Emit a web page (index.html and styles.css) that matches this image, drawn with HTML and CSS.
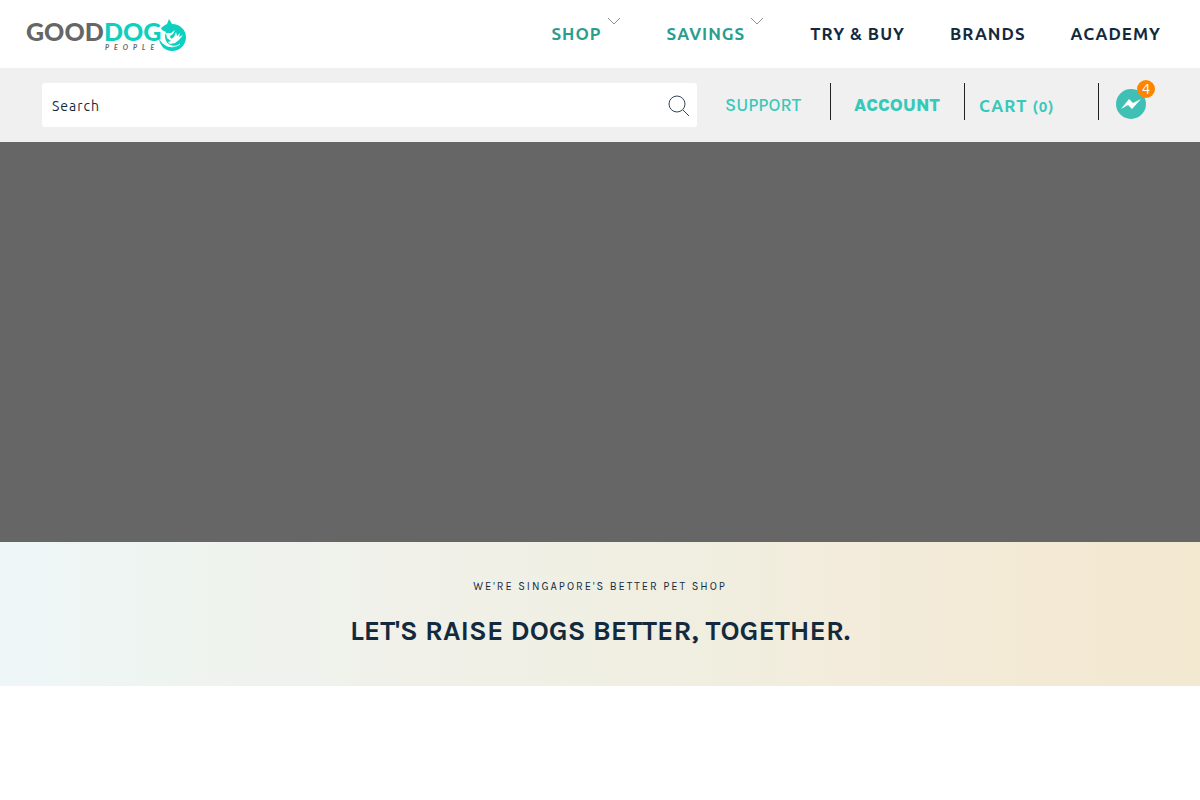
FILE: index.html
```html
<!DOCTYPE html>
<html lang="en">
<head>
  <meta charset="UTF-8" />
  <meta name="viewport" content="width=device-width, initial-scale=1.0"/>
  <title>Good Dog People</title>
  <link rel="stylesheet" href="styles.css">
</head>
<body>

<header class="header">
  <a class="logo" href="#" aria-label="Good Dog People">
    <svg width="162" height="36" viewBox="0 0 162 36">
      <text class="logo-name good" x="0" y="25">GOOD</text>
      <text class="logo-name dog" x="78" y="25">DOG</text>
      <text class="logo-sub" x="79" y="34">PEOPLE</text>
      <!-- dog curled into a circle -->
      <path fill="#0dd0c0" d="M135 12 L139 9 L141 8 L143 3 L146 8 C154 8 160 14 160 21 C160 29 154 35 146 35 C139 35 134 30 133 23 C137 29 142 32 148 31 C142 29 139 25 139 20 L140 16 L136 14 Z"/>
      <path fill="#fff" d="M140 17 L145 17 L149 14 L147 18 L144 20 L145 23 L148 21 L150 16 L151 20 L154 17 L153 21 L157 19 L153 24 L149 27 L144 28 L142 26 L145 25 L141 22 Z"/>
      <path fill="none" stroke="#fff" d="M142 28 C146 31 150 31 154 28"/>
    </svg>
  </a>
  <nav class="nav">
    <a class="nav-link has-menu" href="#">SHOP
      <svg class="chevron" width="14" height="8" viewBox="0 0 14 8"><path d="M1 1l6 6 6-6"/></svg>
    </a>
    <a class="nav-link has-menu" href="#">SAVINGS
      <svg class="chevron" width="14" height="8" viewBox="0 0 14 8"><path d="M1 1l6 6 6-6"/></svg>
    </a>
    <a class="nav-link" href="#">TRY &amp; BUY</a>
    <a class="nav-link" href="#">BRANDS</a>
    <a class="nav-link" href="#">ACADEMY</a>
  </nav>
</header>

<div class="toolbar">
  <form class="search">
    <input type="text" placeholder="Search" aria-label="Search">
    <button type="submit" aria-label="Submit search">
      <svg width="22" height="22" viewBox="0 0 22 22"><circle cx="10" cy="10" r="8"/><path d="M16 16l6 6"/></svg>
    </button>
  </form>
  <a class="support" href="#">SUPPORT</a>
  <a class="account" href="#">ACCOUNT</a>
  <a class="cart" href="#">CART <span class="cart-count">(0)</span></a>
  <a class="messenger" href="#" aria-label="Messages">
    <svg width="30" height="30" viewBox="0 0 30 30">
      <circle cx="15" cy="15" r="15" fill="#40c0b5"/>
      <path fill="#fff" d="M5 20 L13 10 L17 14 L25 10 L16 20 L12 16 Z"/>
    </svg>
    <span class="badge">4</span>
  </a>
</div>

<section class="hero"></section>

<section class="intro">
  <p>WE'RE SINGAPORE'S BETTER PET SHOP</p>
  <h1>LET'S RAISE DOGS BETTER, TOGETHER.</h1>
</section>

</body>
</html>
```

FILE: styles.css
```css
* {
  box-sizing: border-box;
}

body {
  margin: 0;
  background-color: #fff;
  color: #132a3e;
  font-family: Ubuntu, "Noto Sans", sans-serif;
}

a {
  text-decoration: none;
}

.header {
  display: flex;
  align-items: center;
  justify-content: space-between;
  height: 68px;
  padding: 0 39px 0 26px;
}

.logo svg {
  display: block;
}

.logo-name {
  font: 900 25px Lato, sans-serif;
}

.good {
  fill: #666;
}

.dog {
  fill: #0dd0c0;
}

.logo-sub {
  font: italic 700 7px Lato, sans-serif;
  letter-spacing: 5px;
  fill: #666;
}

.nav {
  display: flex;
  gap: 45px;
}

.nav-link {
  color: #132a3e;
  font-size: 17px;
  font-weight: 700;
  letter-spacing: 1px;
  line-height: 24px;
}

.has-menu {
  display: flex;
  gap: 5px;
  padding-right: 1px;
  color: #2a9d8f;
}

.chevron {
  fill: none;
  stroke: #89929b;
  margin-top: -5px;
}

.toolbar {
  display: flex;
  align-items: center;
  height: 74px;
  padding: 0 54px 0 42px;
  background-color: #f0f0f0;
}

.search {
  display: flex;
  flex: 1;
  height: 44px;
  background-color: #fff;
  border-radius: 3px;
}

.search input {
  flex: 1;
  min-width: 0;
  padding: 2px 10px 0;
  border: none;
  background: none;
  color: #132a3e;
  font-family: inherit;
  font-size: 14px;
  letter-spacing: 1px;
}

.search input::placeholder {
  color: #132a3e;
}

.search button {
  padding: 0 8px;
  border: none;
  background: none;
  cursor: pointer;
}

.search button svg {
  display: block;
  fill: none;
  stroke: #364859;
}

.support,
.account,
.cart {
  width: 134px;
  height: 37px;
  margin-bottom: 8px;
  border-right: 1px solid #222;
  color: #36c9b9;
  line-height: 44px;
  white-space: nowrap;
}

.support,
.account {
  font-family: Karla, Inter, sans-serif;
  font-size: 18px;
}

.support {
  padding-left: 28px;
  font-weight: 500;
}

.account {
  padding-left: 23px;
  font-weight: 800;
}

.cart {
  padding-left: 14px;
  font-size: 17px;
  font-weight: 700;
  letter-spacing: 1px;
  line-height: 46px;
}

.cart-count {
  font-size: 15px;
}

.messenger {
  position: relative;
  margin: 0 0 2px 17px;
}

.messenger svg {
  display: block;
}

.badge {
  position: absolute;
  top: -9px;
  right: -9px;
  width: 18px;
  height: 18px;
  border-radius: 50%;
  background-color: #ff8400;
  color: #fff;
  font-size: 15px;
  line-height: 18px;
  text-align: center;
}

.hero {
  height: 400px;
  background-color: #666;
}

.intro {
  padding: 36px 20px;
  background: linear-gradient(90deg, #eff6f8 0%, #eef4ef 15%, #f0f1eb 30%, #f0eedf 60%, #f3ecdc 70%, #f3e8d0 100%);
  font-family: Karla, Inter, sans-serif;
  text-align: center;
}

.intro p {
  margin: 0 0 16px;
  font-size: 11px;
  letter-spacing: 2px;
  line-height: 18px;
}

.intro h1 {
  margin: 0;
  font-size: 28px;
  font-weight: 700;
  line-height: 38px;
}
```
